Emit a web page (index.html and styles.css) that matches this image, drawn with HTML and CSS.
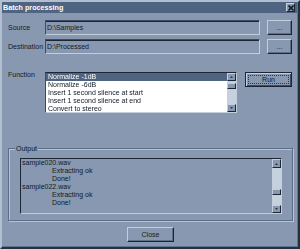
FILE: index.html
```html
<!DOCTYPE html>
<html>
<head>
<meta charset="utf-8">
<link rel="stylesheet" href="styles.css">
</head>
<body>
<div class="window">
  <div class="titlebar">
    <span class="title">Batch processing</span>
    <span class="tb-close"><svg width="6" height="6" viewBox="0 0 6 6"><path d="M0.5 0.5L5.5 5.5M5.5 0.5L0.5 5.5" stroke="#141c28" stroke-width="1.6"/></svg></span>
  </div>
  <div class="content">
    <div class="field-row">
      <span class="label">Source</span>
      <div class="input">D:\Samples</div>
      <button class="btn btn-browse">...</button>
    </div>
    <div class="field-row row-dest">
      <span class="label">Destination</span>
      <div class="input">D:\Processed</div>
      <button class="btn btn-browse">...</button>
    </div>
    <div class="func-row">
      <span class="label label-func">Function</span>
      <div class="listbox">
        <ul class="items">
          <li class="sel">Normalize -1dB</li>
          <li>Normalize -6dB</li>
          <li>Insert 1 second silence at start</li>
          <li>Insert 1 second silence at end</li>
          <li>Convert to stereo</li>
        </ul>
        <div class="vscroll">
          <div class="sb-btn"><svg width="3" height="2" viewBox="0 0 4 2"><path d="M0 2H4L2 0Z" fill="#141c28"/></svg></div>
          <div class="sb-track sb-track-list"><div class="sb-thumb"></div></div>
          <div class="sb-btn"><svg width="3" height="2" viewBox="0 0 4 2"><path d="M0 0H4L2 2Z" fill="#141c28"/></svg></div>
        </div>
      </div>
      <button class="btn btn-default"><span class="focus">Run</span></button>
    </div>
    <div class="group">
      <span class="legend">Output</span>
      <div class="output">
        <div class="log">
          <div>sample020.wav</div>
          <div class="ind">Extracting ok</div>
          <div class="ind">Done!</div>
          <div>sample022.wav</div>
          <div class="ind">Extracting ok</div>
          <div class="ind">Done!</div>
        </div>
        <div class="vscroll">
          <div class="sb-btn sb-btn-up"><svg width="3" height="2" viewBox="0 0 4 2"><path d="M0 2H4L2 0Z" fill="#141c28"/></svg></div>
          <div class="sb-track sb-track-out"><div class="sb-thumb"></div></div>
          <div class="sb-btn"><svg width="3" height="2" viewBox="0 0 4 2"><path d="M0 0H4L2 2Z" fill="#141c28"/></svg></div>
        </div>
      </div>
    </div>
    <div class="footer">
      <button class="btn btn-close">Close</button>
    </div>
  </div>
</div>
</body>
</html>
```
FILE: styles.css
```css
* { box-sizing: border-box; }
html, body { margin: 0; padding: 0; }
body {
  width: 300px;
  height: 249px;
  overflow: hidden;
  background: #8798b0;
  font-family: "Liberation Sans", Arial, sans-serif;
  font-size: 7px;
  line-height: 8px;
  color: #121a26;
}
.window {
  width: 300px;
  height: 249px;
  border-style: solid;
  border-width: 2px;
  border-color: #b2bfd0 #26313f #26313f #b2bfd0;
  box-shadow: inset -1px -1px 0 #627590;
  display: flex;
  flex-direction: column;
}
.titlebar {
  height: 11px;
  margin-right: 1px;
  background: #4e6480;
  display: flex;
  align-items: center;
  justify-content: space-between;
  padding: 0 2px 0 1px;
}
.title {
  color: #ffffff;
  font-weight: bold;
  font-size: 7.2px;
}
.tb-close {
  width: 9px;
  height: 9px;
  background: #8798b0;
  border: 1px solid;
  border-color: #c4d0de #1c2532 #1c2532 #c4d0de;
  display: flex;
  align-items: center;
  justify-content: center;
}
.content {
  flex: 1;
  display: flex;
  flex-direction: column;
  padding: 7px 5px 0 6px;
}
.field-row {
  display: flex;
  align-items: center;
  height: 15px;
}
.row-dest { margin-top: 4px; }
.label { width: 37px; flex: none; }
.input {
  width: 215px;
  height: 15px;
  border: 1px solid;
  border-color: #3d4c61 #c2cedc #c2cedc #3d4c61;
  box-shadow: inset 0 1px 0 #1c2532;
  padding: 3px 0 0 1px;
}
.btn {
  background: #8798b0;
  border: 1px solid;
  border-color: #c2cedc #1c2532 #1c2532 #c2cedc;
  box-shadow: inset -1px -1px 0 #5d6f88;
  font-family: inherit;
  font-size: 7px;
  line-height: 8px;
  color: #121a26;
  padding: 0;
  text-align: center;
}
.btn-browse {
  width: 25px;
  height: 15px;
  margin-left: 7px;
}
.func-row {
  display: flex;
  align-items: flex-start;
  margin-top: 18px;
}
.label-func { margin-top: -1px; }
.listbox {
  width: 192px;
  height: 41px;
  border: 1px solid;
  border-color: #1c2532 #c2cedc #c2cedc #3d4c61;
  background: #ffffff;
  display: flex;
  will-change: transform;
}
.items {
  list-style: none;
  margin: 0;
  padding: 0;
  flex: 1;
  overflow: hidden;
}
.items li {
  height: 8px;
  padding-left: 2px;
  white-space: nowrap;
  color: #121a26;
}
.items li.sel {
  background: #4e6480;
  color: #ffffff;
}
.vscroll {
  width: 9px;
  flex: none;
  display: flex;
  flex-direction: column;
}
.sb-btn {
  height: 8px;
  flex: none;
  background: #8798b0;
  border: 1px solid;
  border-color: #c2cedc #1c2532 #1c2532 #c2cedc;
  display: flex;
  align-items: center;
  justify-content: center;
}
.sb-btn-up { height: 9px; }
.sb-track {
  flex: 1;
  background: #c6d1de;
  display: flex;
  flex-direction: column;
}
.sb-thumb {
  height: 6px;
  background: #8798b0;
  border: 1px solid;
  border-color: #c2cedc #1c2532 #1c2532 #c2cedc;
}
.sb-track-list { padding-top: 2px; }
.sb-track-out { padding-top: 21px; }
.btn-default {
  width: 47px;
  height: 15px;
  margin-left: 8px;
  border: 1px solid #1c2532;
  box-shadow: inset 1px 1px 0 #c2cedc, inset -1px -1px 0 #3d4c61;
  padding: 2px;
  display: flex;
}
.focus {
  flex: 1;
  border: 1px dotted #2a3646;
  display: flex;
  align-items: center;
  justify-content: center;
  line-height: 7px;
}
.group {
  position: relative;
  margin-top: 35px;
  height: 73px;
  border: 1px solid #5d6f88;
  box-shadow: inset 1px 1px 0 #b6c3d4, 1px 1px 0 #b6c3d4;
  padding: 9px 10px 0 11px;
}
.legend {
  position: absolute;
  top: -4px;
  left: 6px;
  padding: 0 1px;
  background: #8798b0;
}
.output {
  height: 56px;
  border: 1px solid;
  border-color: #1c2532 #c2cedc #c2cedc #1c2532;
  display: flex;
}
.log {
  flex: 1;
  padding-left: 1px;
}
.ind { padding-left: 30px; }
.footer {
  display: flex;
  justify-content: center;
  margin-top: 6px;
}
.btn-close {
  width: 47px;
  height: 15px;
}
```
